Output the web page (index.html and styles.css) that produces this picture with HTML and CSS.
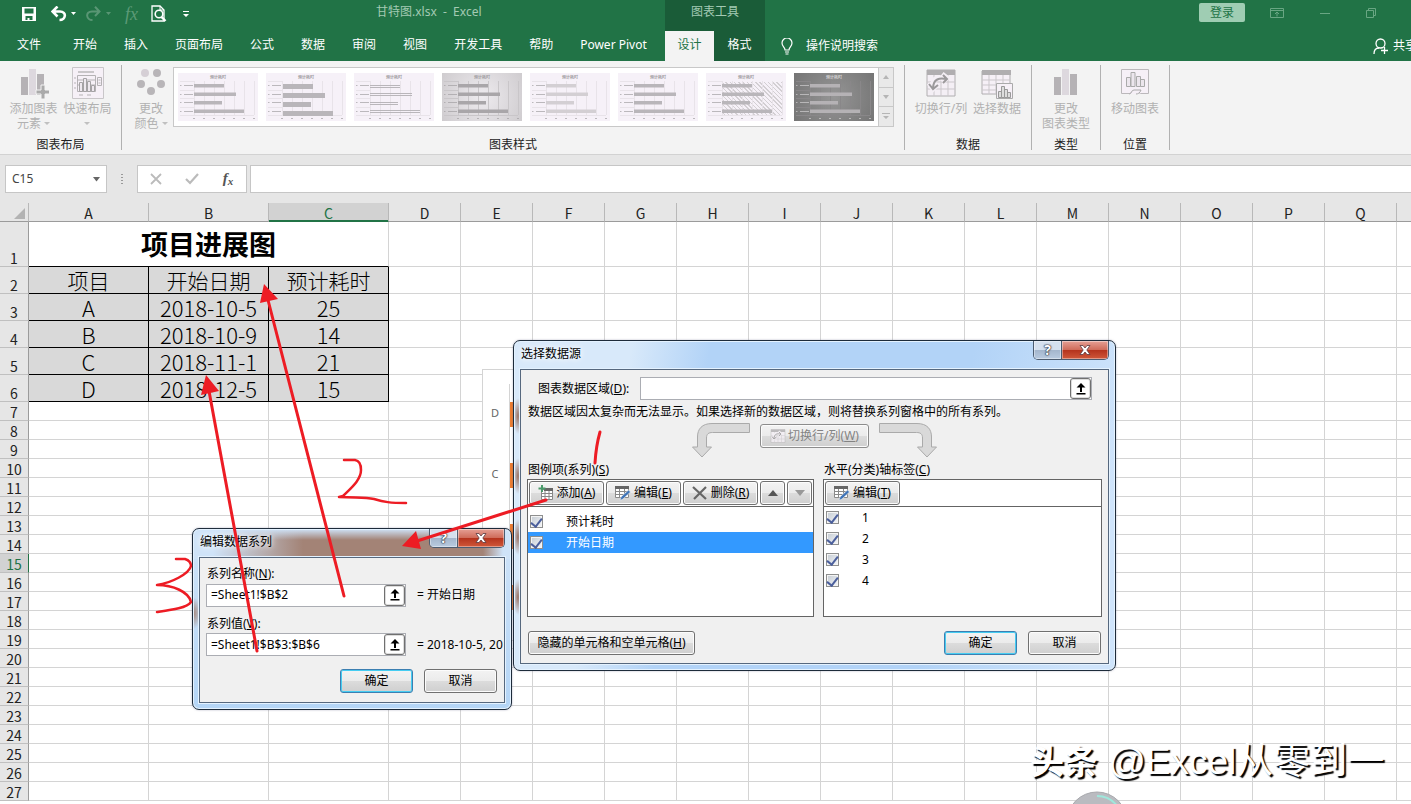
FILE: index.html
```html
<!DOCTYPE html>
<html lang="zh-CN">
<head>
<meta charset="utf-8">
<title>甘特图.xlsx - Excel</title>
<link rel="stylesheet" href="styles.css">
</head>
<body>
<svg class="defs" aria-hidden="true">
  <symbol id="thumb" viewBox="0 0 80 48">
    <path class="grid" d="M16.5 8v34M26.500 8v34M36.500 8v34M46.500 8v34M56.500 8v34M66.500 8v34M76.500 8v34M2 8.500h14M2 17.500h14M2 25.500h14M2 34.500h14M2 42.500h74"/>
    <path class="marks" d="M2 12.500h1.500M6 12.500h9M2 21.500h1.500M6 21.500h9M2 29.500h1.500M6 29.500h9M2 38.500h1.500M6 38.500h9M15 45.500h2M25 45.500h2M35 45.500h2M45 45.500h2M55 45.500h2M65 45.500h2M75 45.500h2"/>
    <text class="cap" x="40" y="6" text-anchor="middle">预计耗时</text>
  </symbol>
  <symbol id="bars" viewBox="0 0 80 48"><path d="M16 11h30v3.500H16zM16 19.500h42v3.500H16zM16 28h28v3.500H16zM16 36.500h50v3.500H16z"/></symbol>
  <symbol id="fat" viewBox="0 0 80 48"><path d="M17 11h30v5H17zM17 20h42v5H17zM17 29h28v5H17zM17 38h50v5H17z"/></symbol>
  <symbol id="thin" viewBox="0 0 80 48"><path d="M16 12h30v1H16zM16 14h30v1H16zM16 20h42v1H16zM16 22h42v1H16zM16 29h28v1H16zM16 31h28v1H16zM16 37h50v1H16zM16 39h50v1H16z"/></symbol>
  <symbol id="upload" viewBox="0 0 16 16"><path d="M8 2L3.500 6.500h3.500V11h2V6.500h3.500zM3.500 12h9v1.500h-9z" fill="#000"/></symbol>
  <symbol id="editgrid" viewBox="0 0 16 16"><path d="M.5 1.500h13v11H.5zM.5 6.500h13M.5 9.500h13M4.500 4v8.500M9.500 4v8.500" fill="#fff" stroke="#8a8a8a"/><path d="M0 1h14v3H0z" fill="#666"/><path d="M5 15.500l1-3.500 7.500-7 2 2-7.500 7z" fill="#3f74b8" stroke="#eee" stroke-width=".6"/></symbol>
  <symbol id="swap" viewBox="0 0 30 32">
    <path d="M1 3h28v26H1z" fill="#f4eff5" stroke="#b0aeb0"/><path d="M1 3h28v5H1z" fill="#b0aeb0"/><path d="M1 15h28M1 22h28M8 8v21M15 8v21M22 8v21" stroke="#cbc7cb" fill="none"/><path d="M7 18c0-9 7-7 13-7M16 7l5 4-5 4M3 16l4 6 5-5" fill="none" stroke="#f4eff5" stroke-width="5"/><path d="M7 22c0-11 7-11 13-10M17 8l4 4-4 4M3 17l4 5 5-4" fill="none" stroke="#9b999b" stroke-width="2"/>
  </symbol>
</svg>

<header class="top">
  <div class="quick">
    <button aria-label="保存"><svg width="16" height="16" viewBox="0 0 16 16"><path fill="#fff" fill-rule="evenodd" d="M1 1h14v14H1zM3.500 2.500v5h9v-5zM4.500 10v4h2v-2h2v2h3v-4z"/></svg></button>
    <button aria-label="撤消"><svg width="26" height="16" viewBox="0 0 26 16"><path d="M1 5.500h8c7 0 6 8.500-.5 8.500M6.500 .5L1.500 5.500 6.500 10.500" fill="none" stroke="#fff" stroke-width="2.600"/><path d="M20 6h5l-2.500 3z" fill="#fff"/></svg></button>
    <button aria-label="恢复"><svg width="26" height="16" viewBox="0 0 26 16" opacity=".25"><path d="M14 5.500H6c-7 0-6 8.500 .5 8.500M9 .8l4.500 4.700L9 10" fill="none" stroke="#fff" stroke-width="2"/><path d="M20 6h5l-2.500 3z" fill="#fff"/></svg></button>
    <button class="qfx" aria-label="插入函数">fx</button>
    <button aria-label="打印预览"><svg width="16" height="18" viewBox="0 0 16 18"><path d="M1 1h8l4 4v11H1z" fill="none" stroke="#fff" stroke-width="1.300"/><circle cx="8" cy="9" r="3.800" fill="#217346" stroke="#fff" stroke-width="1.600"/><path d="M10.500 12l4 4" stroke="#fff" stroke-width="2.400"/><path d="M9 1v4h4" fill="none" stroke="#fff"/></svg></button>
    <button aria-label="自定义快速访问工具栏"><svg width="8" height="8" viewBox="0 0 8 8"><path d="M1 1h6v1H1zM1 4h6L4 7z" fill="#fff"/></svg></button>
  </div>
  <div class="doc">甘特图.xlsx&nbsp; -&nbsp; Excel</div>
  <div class="ctx">图表工具</div>
  <div class="winctl">
    <button class="login">登录</button>
    <button aria-label="功能区显示选项"><svg width="14" height="12" viewBox="0 0 14 12" fill="none" stroke="#69a683"><path d="M.5 1.500h13v9H.5zM.5 3.500h13M7 9.500V5M5 7l2-2 2 2"/></svg></button>
    <button aria-label="最小化"><svg width="10" height="12" viewBox="0 0 10 12"><path d="M0 6.500h10" stroke="#69a683"/></svg></button>
    <button aria-label="还原"><svg width="10" height="12" viewBox="0 0 10 12" fill="none" stroke="#69a683"><path d="M.5 3.500h7v7h-7zM2.500 3.500v-2h7v7h-2"/></svg></button>
  </div>
  <nav class="tabs">
    <a class="file" href="#">文件</a><a href="#">开始</a><a href="#">插入</a><a href="#">页面布局</a><a href="#">公式</a><a href="#">数据</a><a href="#">审阅</a><a href="#">视图</a><a href="#">开发工具</a><a href="#">帮助</a><a href="#">Power Pivot</a>
  </nav>
  <nav class="ctxtabs"><a class="on" href="#">设计</a><a href="#">格式</a></nav>
  <div class="tell">
    <a href="#"><svg width="12" height="17" viewBox="0 0 12 17" fill="none" stroke="#fff" stroke-width="1.200"><path d="M4 12c0-3-3-3.500-3-7a5 5 0 0 1 10 0c0 3.500-3 4-3 7zM4 14h4M4.500 16h3"/></svg>操作说明搜索</a>
    <a class="share" href="#"><svg width="16" height="17" viewBox="0 0 16 17" fill="none" stroke="#fff" stroke-width="1.300"><circle cx="7.500" cy="5.500" r="4.500"/><path d="M1 16c0-4 2-6 5-6M8 12.500h7M11.500 9v7"/></svg>共享</a>
  </div>
</header>

<section class="ribbon">
  <div class="group g-layout">
    <div class="tools">
      <button class="big"><svg width="30" height="32" viewBox="0 0 30 32"><path d="M2 10h7v18H2zM18 7h7v21h-7z" fill="#b5b2b5"/><path d="M10 2h7v26h-7z" fill="#ddd8de"/><path d="M17 23h5v-5h4v5h5v4h-5v5h-4v-5h-5z" fill="#aaa" stroke="#f3f3f3"/></svg><span>添加图表<br>元素 <i class="dd"></i></span></button>
      <button class="big"><svg width="32" height="32" viewBox="0 0 32 32"><path d="M.5 .5h31v31H.5z" fill="#f6f0f7" stroke="#c9c6c9"/><path d="M6 4h16v2H6z" fill="#c9c6c9"/><path d="M5.500 8.500h18v16h-18zM5 13h19M5 18h19M2 11h2M2 16h2M2 21h2M7 28h4M15 28h4M25.500 10.500h4v8h-4zM26.500 13h2M26.500 16h2" fill="none" stroke="#b5b2b5"/><path d="M7.500 15.500h3v9h-3zM11.500 11.500h3v13h-3zM15.500 14.500h3v10h-3zM19.500 18.500h3v6h-3z" fill="#eee8ef" stroke="#a5a2a5"/></svg><span>快速布局<br><i class="dd"></i></span></button>
    </div>
    <div class="cap">图表布局</div>
  </div>
  <div class="group g-style">
    <div class="tools">
      <button class="big"><svg width="30" height="32" viewBox="0 0 30 32" fill="#b8b5b8"><circle cx="9" cy="6" r="4" fill="#d5cfd5"/><circle cx="21" cy="6" r="4"/><circle cx="5" cy="17" r="4"/><circle cx="25" cy="17" r="4"/><circle cx="15" cy="24" r="4"/></svg><span>更改<br>颜色 <i class="dd"></i></span></button>
      <div class="gallery">
        <button class="th"><svg><use href="#thumb"/><use href="#bars"/></svg></button>
        <button class="th"><svg><use href="#thumb"/><use href="#fat"/></svg></button>
        <button class="th"><svg><use href="#thumb"/><use href="#thin"/></svg></button>
        <button class="th shade"><svg><use href="#thumb"/><use href="#bars"/></svg></button>
        <button class="th pale"><svg><use href="#thumb"/><use href="#bars"/></svg></button>
        <button class="th"><svg><use href="#thumb"/><use href="#bars"/></svg></button>
        <button class="th hatch"><svg><use href="#thumb"/><use href="#bars"/></svg></button>
        <button class="th dark"><svg><use href="#thumb"/><use href="#bars"/></svg></button>
        <div class="scroller">
          <button aria-label="上一行"><svg width="6" height="4" viewBox="0 0 6 4"><path d="M0 4h6L3 0z"/></svg></button>
          <button aria-label="下一行"><svg width="6" height="4" viewBox="0 0 6 4"><path d="M0 0h6L3 4z"/></svg></button>
          <button aria-label="其他"><svg width="8" height="7" viewBox="0 0 8 7"><path d="M0 0h8v1H0zM1 3h6L4 6z"/></svg></button>
        </div>
      </div>
    </div>
    <div class="cap">图表样式</div>
  </div>
  <div class="group g-data">
    <div class="tools">
      <button class="big"><svg width="30" height="32"><use href="#swap"/></svg><span>切换行/列</span></button>
      <button class="big"><svg width="32" height="32" viewBox="0 0 32 32"><path d="M1 4h28v23H1z" fill="#f6f0f7" stroke="#b0aeb0"/><path d="M1 3h29v5H1z" fill="#b0aeb0"/><path d="M1 13h28M1 18h28M1 23h28M8 8v19M15 8v19M22 8v19" stroke="#cbc7cb"/><path d="M15.500 16.500h16v15h-16z" fill="#f6f0f7" stroke="#aaa"/><path d="M17.500 24.500h3v6h-3zM20.500 19.500h3v11h-3zM23.500 22.500h3v8h-3zM26.500 25.500h3v5h-3z" fill="#ddd" stroke="#999"/></svg><span>选择数据</span></button>
    </div>
    <div class="cap">数据</div>
  </div>
  <div class="group g-one">
    <div class="tools"><button class="big"><svg width="24" height="32" viewBox="0 0 24 32"><path d="M0 10h7v18H0zM16 7h7v21h-7z" fill="#b5b2b5"/><path d="M8 2h7v26H8z" fill="#ddd8de"/></svg><span>更改<br>图表类型</span></button></div>
    <div class="cap">类型</div>
  </div>
  <div class="group g-one">
    <div class="tools"><button class="big"><svg width="28" height="32" viewBox="0 0 28 32"><path d="M.5 2.500h27v24h-8l-2-1h-6l-3 1h-8z" fill="#f6f0f7" stroke="#bbb8bb"/><path d="M8 27c3 0 2-4 5-4h7c-1 3-3 4-5 4" fill="#f6f0f7" stroke="#aaa"/><path d="M5.500 10.500h4v9h-4zM10 5.500h4v14h-4zM15.500 9.500h4v10h-4zM19.500 12.500h4v7h-4z" fill="#ece6ed" stroke="#aaa"/></svg><span>移动图表</span></button></div>
    <div class="cap">位置</div>
  </div>
</section>

<div class="formula">
  <button class="namebox"><span>C15</span><svg width="7" height="5" viewBox="0 0 7 5"><path d="M0 0h7L3.500 4.500z" fill="#666"/></svg></button>
  <div class="dots"><i></i><i></i><i></i><i></i></div>
  <div class="fbtns">
    <button aria-label="取消输入"><svg width="12" height="12" viewBox="0 0 12 12"><path d="M1 1l10 10M11 1L1 11" stroke="#bbb" stroke-width="1.800"/></svg></button>
    <button aria-label="输入"><svg width="14" height="12" viewBox="0 0 14 12"><path d="M1 6l4 4 8-9" fill="none" stroke="#bbb" stroke-width="2.200"/></svg></button>
    <button class="fx" aria-label="函数">f<sub>x</sub></button>
  </div>
  <input class="fin" aria-label="编辑栏">
</div>

<main class="sheet">
  <table class="cells">
    <colgroup><col class="c0"><col class="cw"><col class="cw"><col class="cw"></colgroup>
    <thead><tr><th class="corner"><svg width="11" height="11" viewBox="0 0 11 11"><path d="M11 0v11H0z" fill="#b3b3b3"/></svg></th><th>A</th><th>B</th><th class="sel">C</th></tr></thead>
    <tbody>
      <tr class="r1"><th>1</th><td class="title" colspan="3">项目进展图</td></tr>
      <tr class="rd names"><th>2</th><td>项目</td><td>开始日期</td><td>预计耗时</td></tr>
      <tr class="rd"><th>3</th><td>A</td><td>2018-10-5</td><td>25</td></tr>
      <tr class="rd"><th>4</th><td>B</td><td>2018-10-9</td><td>14</td></tr>
      <tr class="rd"><th>5</th><td>C</td><td>2018-11-1</td><td>21</td></tr>
      <tr class="rd"><th>6</th><td>D</td><td>2018-12-5</td><td>15</td></tr>
    </tbody>
  </table>
</main>

<div class="chart"><div class="labels"><span>D</span><span>C</span></div><div class="plot"><i></i><i></i><i></i><i></i></div></div>

<section class="dlg dlg-src" role="dialog" aria-label="选择数据源">
  <div class="bar"><h2>选择数据源</h2><div class="caps"><button class="help" aria-label="帮助">?</button><button class="close" aria-label="关闭"><svg width="12" height="10" viewBox="0 0 12 10"><path d="M1 .5h3l2 2.500 2-2.500h3L7.800 5 11 9.500H8L6 7 4 9.500H1L4.200 5z" fill="#fff" stroke="#5a3a40" stroke-width=".8"/></svg></button></div></div>
  <div class="body">
    <div class="range"><label for="rng">图表数据区域(<u>D</u>):</label><div class="ref"><input id="rng"><button aria-label="折叠对话框"><svg width="16" height="16"><use href="#upload"/></svg></button></div></div>
    <p class="note">数据区域因太复杂而无法显示。如果选择新的数据区域，则将替换系列窗格中的所有系列。</p>
    <div class="swaprow">
      <svg width="58" height="36" viewBox="0 0 58 36"><path d="M57.500 .5H20C10 .5 5.500 6 5.500 14v10H.5l9.500 10 9.500-10h-5V15c0-4 2-5.500 6-5.500h37z" fill="#d9d9d9" stroke="#aaa"/></svg>
      <button class="btn off"><svg width="16" height="16"><use href="#swap"/></svg><span>切换行/列(<u>W</u>)</span></button>
      <svg width="58" height="36" viewBox="0 0 58 36"><path d="M.5 .5H38C48 .5 52.500 6 52.500 14v10h5L48 34 38.500 24h5V15c0-4-2-5.500-6-5.500H.5z" fill="#d9d9d9" stroke="#aaa"/></svg>
    </div>
    <div class="lists">
      <div class="pane">
        <div class="plabel">图例项(系列)(<u>S</u>)</div>
        <div class="list">
          <div class="lbar">
            <button class="btn"><svg width="16" height="16" viewBox="0 0 16 16"><path d="M3.500 4.500h11v10h-11zM3.500 8.500h11M3.500 11.500h11M7 5v9M11 5v9" fill="#fff" stroke="#888"/><path d="M6 3h9v3H6z" fill="#666"/><path d="M4 0v7M.5 3.500h7" stroke="#4a9a6a" stroke-width="2"/></svg><span>添加(<u>A</u>)</span></button>
            <button class="btn"><svg width="16" height="16"><use href="#editgrid"/></svg><span>编辑(<u>E</u>)</span></button>
            <button class="btn"><svg width="16" height="16" viewBox="0 0 16 16"><path d="M1 2l13 12M14 2L2 14" stroke="#666" stroke-width="2.200"/></svg><span>删除(<u>R</u>)</span></button>
            <button class="btn sm" aria-label="上移"><svg width="10" height="6" viewBox="0 0 10 6"><path d="M0 6h10L5 0z" fill="#555"/></svg></button>
            <button class="btn sm" aria-label="下移"><svg width="10" height="6" viewBox="0 0 10 6"><path d="M0 0h10L5 6z" fill="#999"/></svg></button>
          </div>
          <div class="items roomy">
            <label><input type="checkbox" checked><span>预计耗时</span></label>
            <label class="hit"><input type="checkbox" checked><span>开始日期</span></label>
          </div>
        </div>
      </div>
      <div class="pane">
        <div class="plabel">水平(分类)轴标签(<u>C</u>)</div>
        <div class="list">
          <div class="lbar"><button class="btn"><svg width="16" height="16"><use href="#editgrid"/></svg><span>编辑(<u>T</u>)</span></button></div>
          <div class="items">
            <label><input type="checkbox" checked><span>1</span></label>
            <label><input type="checkbox" checked><span>2</span></label>
            <label><input type="checkbox" checked><span>3</span></label>
            <label><input type="checkbox" checked><span>4</span></label>
          </div>
        </div>
      </div>
    </div>
    <div class="foot"><button class="btn hide"><span>隐藏的单元格和空单元格(<u>H</u>)</span></button><button class="btn ok">确定</button><button class="btn">取消</button></div>
  </div>
</section>

<section class="dlg dlg-edit" role="dialog" aria-label="编辑数据系列">
  <div class="bar"><h2>编辑数据系列</h2><div class="caps"><button class="help" aria-label="帮助">?</button><button class="close" aria-label="关闭"><svg width="12" height="10" viewBox="0 0 12 10"><path d="M1 .5h3l2 2.500 2-2.500h3L7.800 5 11 9.500H8L6 7 4 9.500H1L4.200 5z" fill="#fff" stroke="#5a3a40" stroke-width=".8"/></svg></button></div></div>
  <div class="body">
    <label for="sname">系列名称(<u>N</u>):</label>
    <div class="line"><div class="ref"><input id="sname" value="=Sheet1!$B$2"><button aria-label="折叠对话框"><svg width="16" height="16"><use href="#upload"/></svg></button></div><output>= 开始日期</output></div>
    <label for="sval">系列值(<u>V</u>):</label>
    <div class="line"><div class="ref"><input id="sval" value="=Sheet1!$B$3:$B$6"><button aria-label="折叠对话框"><svg width="16" height="16"><use href="#upload"/></svg></button></div><output>= 2018-10-5, 20</output></div>
    <div class="foot"><button class="btn ok">确定</button><button class="btn">取消</button></div>
  </div>
</section>

<svg class="ink" width="1411" height="804" viewBox="0 0 1411 804" aria-hidden="true">
  <g fill="none" stroke="#ed1c24" stroke-width="3" stroke-linecap="round" stroke-linejoin="round">
    <path d="M344 596L268 300M257 651L209 391M546 500L417 541"/>
    <path d="M600 432Q596 446 595 463"/>
    <path d="M344 460h11q6 1 6 10c0 10-10 18-18 26l-4 1c18 1 26 0 35 2 10 3 16 4 32 4" stroke-width="2.500"/>
    <path d="M176 559h9q6 2 6 7c-2 8-20 17-34 19 16 0 32 7 34 17-4 6-20 8-34 10" stroke-width="2.500"/>
  </g>
  <path fill="#ed1c24" d="M264 284L260 303 278 299zM206 375L201 395 219 391zM402 546L416 531 421 549z"/>
</svg>
<svg class="orb" width="62" height="13" viewBox="0 0 62 13"><circle cx="31" cy="31" r="30" fill="#babbc0" stroke="#a8a9ad"/><path d="M31 5A26 26 0 0 1 52 16" fill="none" stroke="#9fe8dc" stroke-width="2"/></svg>
<div class="mark"><b>头条</b> @Excel从零到一</div>
<script src="sheet.js"></script>
</body>
</html>
```
FILE: styles.css
```css
* { box-sizing: border-box; }
body {
  margin: 0; height: 100vh; overflow: hidden; position: relative;
  display: flex; flex-direction: column; background: #fff; color: #000;
  font: 12px/16px "Noto Sans", "Noto Sans CJK SC", sans-serif;
}
button, input { font: inherit; color: inherit; margin: 0; padding: 0; border: 0; background: none; border-radius: 0; }
a { color: inherit; text-decoration: none; }
svg { flex: none; display: block; }
.defs { position: absolute; width: 0; height: 0; }

/* title bar and tabs */
.top { flex: none; display: grid; grid-template: 31px 30px / 376px 289px 100px 1fr; background: #217346; color: #fff; }
.quick { display: flex; align-items: center; padding: 0 0 3px 21px; gap: 13px; }
.quick button:nth-child(2) { margin-left: 1px; }
.quick button:nth-child(3) { margin-left: -4px; }
.quick button:last-child { margin-left: 2px; }
.qfx { font: italic 18px/20px "Liberation Serif", serif; color: #5c9a77; }
.doc { color: #a3cab3; padding-top: 4px; }
.ctx { background: #1a5c38; color: #a3cab3; text-align: center; padding-top: 4px; }
.winctl { display: flex; align-items: center; justify-content: flex-end; gap: 36px; padding: 0 35px 6px 0; }
.login { background: #9fcdb3; color: #217346; width: 46px; height: 19px; border-radius: 2px; line-height: 18px; margin-right: -11px; }
.tabs { grid-column: 1 / 3; display: flex; gap: 3px; padding-left: 5px; }
.tabs a, .ctxtabs a { padding: 0 12px; line-height: 28px; white-space: nowrap; }
.tabs .file { margin-right: 5px; }
.ctxtabs { background: #1a5c38; display: flex; }
.ctxtabs a { flex: 1 1 50px; text-align: center; padding: 0; }
.ctxtabs .on { background: #f3f3f3; color: #217346; flex-basis: 49px; flex-grow: 0; }
.tell { display: flex; justify-content: space-between; padding-left: 16px; overflow: hidden; }
.tell a { display: flex; align-items: center; gap: 13px; }
.tell .share { gap: 4px; margin-right: -6px; }

/* ribbon */
.ribbon { flex: none; display: flex; background: #f3f3f3; border-bottom: 1px solid #d2d2d2; padding: 4px 0; height: 94px; }
.group { flex: none; display: flex; flex-direction: column; justify-content: space-between; border-right: 1px solid #b1b1b1; }
.g-layout { width: 122px; }
.g-style { width: 783px; }
.g-data { width: 127px; }
.g-one { width: 69px; }
.tools { display: flex; justify-content: center; padding-top: 2px; }
.group .cap { text-align: center; line-height: 12px; height: 11px; color: #222; }
.big { display: flex; flex-direction: column; align-items: center; gap: 2px; color: #b1b1b1; line-height: 15px; width: 54px; white-space: nowrap; }
.g-data .tools { gap: 2px; padding-left: 2px; }
.dd { display: inline-block; border: 3px solid transparent; border-top-color: #c0c0c0; border-bottom: 0; vertical-align: 3px; }
.g-style .tools { justify-content: flex-start; padding-left: 5px; }
.g-style .big { width: 46px; padding-left: 2px; flex: none; }
.gallery { display: flex; border: 1px solid #c8c8c8; background: #fff; height: 60px; flex: none; gap: 8px; padding-left: 4px; align-items: center; }
.th { width: 80px; height: 48px; background: #f6f1f8; flex: none; --bar: #b9b6ba; --grid: #e8e3e9; --txt: #a29fa3; }
.th svg { width: 80px; height: 48px; fill: var(--bar); }
.grid { stroke: var(--grid); fill: none; stroke-width: 1; }
.marks { stroke: var(--txt); fill: none; stroke-width: 1; opacity: .7; }
text.cap { font-size: 4px; font-weight: bold; fill: var(--txt); }
.th.shade { background: radial-gradient(circle, #eeebef, #cfcccf); --bar: #a9a6a9; --grid: #c9c6c9; }
.th.pale { --bar: #d3cfd3; }
.th.hatch { background: linear-gradient(#f6f1f8 9px, transparent 9px 42px, #f6f1f8 42px), linear-gradient(90deg, #f6f1f8 16px, transparent 16px 76px, #f6f1f8 76px), repeating-linear-gradient(45deg, #f6f1f8 0 2px, #d3cfd3 2px 3px); }
.th.dark { background: radial-gradient(circle, #959595, #757575); --bar: #b5b2b5; --grid: #898789; --txt: #d0ced0; }
.scroller { align-self: stretch; width: 15px; margin-left: -4px; display: flex; flex-direction: column; border-left: 1px solid #c8c8c8; background: #e9e9e9; fill: #b5b5b5; }
.scroller button { flex: 1; display: grid; place-items: center; }
.scroller button + button { border-top: 1px solid #c8c8c8; }

/* formula bar */
.formula { flex: none; display: flex; background: #e6e6e6; padding: 10px 0 10px 5px; height: 48px; }
.namebox { width: 102px; border: 1px solid #c6c6c6; background: #fff; display: flex; align-items: center; justify-content: space-between; padding: 0 6px; color: #444; }
.dots { width: 30px; display: flex; flex-direction: column; align-items: center; justify-content: center; gap: 2px; }
.dots i { width: 2px; height: 1px; background: #999; }
.fbtns { width: 110px; border: 1px solid #c6c6c6; background: #fff; display: grid; grid-template-columns: repeat(3, 36px); place-items: center; }
.fx { font: italic bold 15px/18px "Liberation Serif", serif; color: #555; }
.fx sub { font-size: 11px; vertical-align: -2px; }
.fin { flex: 1; margin-left: 3px; border: 1px solid #c6c6c6; border-right: 0; background: #fff; min-width: 0; }

/* worksheet */
.sheet { flex: 1; overflow: hidden; min-height: 0; }
.cells { table-layout: fixed; border-collapse: separate; border-spacing: 0; width: 1469px; font: 14px/17px "Noto Sans CJK SC", sans-serif; }
.c0 { width: 29px; }
.cw { width: 120px; }
.cells th, .cells td { padding: 0; height: 19px; border-right: 1px solid #d4d4d4; border-bottom: 1px solid #d4d4d4; text-align: center; font-weight: normal; white-space: nowrap; }
.cells th { background: #e6e6e6; color: #222; }
.cells thead th { border-right-color: #b8b8b8; border-bottom-color: #9b9b9b; line-height: 16px; padding-top: 2px; }
.cells thead .sel { background: #d2d2d2; color: #217346; box-shadow: inset 0 -1px #217346; border-bottom-color: #217346; }
.cells tbody th { border-right-color: #9b9b9b; border-bottom-color: #c0c0c0; vertical-align: bottom; line-height: 16px; }
.cells tbody th.sel { background: #d2d2d2; color: #217346; border-right-color: #217346; }
.corner svg { margin: 1px 3px 0 auto; }
.cells .r1 > * { height: 45px; }
.cells .title { font-size: 27px; line-height: 42px; font-weight: bold; border-bottom-color: #000; }
.cells .rd > * { height: 27px; }
.cells .rd td { font-size: 22px; line-height: 26px; font-weight: 300; }
.cells .names td { font-size: 21px; }
.cells .rd td:nth-child(-n+4) { background: #d9d9d9; border-right-color: #000; border-bottom-color: #000; }

/* chart behind the dialogs */
.chart { position: absolute; left: 482px; top: 369px; width: 260px; height: 272px; background: #fff; border: 1px solid #d4d4d4; display: flex; padding: 14px 0; color: #666; }
.labels { width: 26px; padding-right: 2px; display: grid; grid-template-rows: repeat(4, 61px); text-align: center; font-size: 11px; line-height: 57px; }
.plot { flex: 1; border-left: 1px solid #d4d4d4; display: grid; grid-template-rows: repeat(4, 61px); align-items: center; }
.plot i { height: 25px; background: #ed7d31; width: 120px; }

/* dialogs */
.dlg { position: absolute; display: flex; flex-direction: column; border: 1px solid #1d2b3a; border-radius: 7px; padding: 0 6px 6px; box-shadow: inset 0 0 0 1px #e4f2ff, 0 0 2px #6688; background: #b9d7f5; }
.dlg-src { left: 513px; top: 340px; width: 603px; height: 331px; background: radial-gradient(ellipse 5px 18px at 4px 75px, #9a7264, #0000), radial-gradient(ellipse 5px 18px at 4px 135px, #9a7264, #0000), radial-gradient(ellipse 5px 18px at 4px 196px, #9a7264, #0000), radial-gradient(ellipse 5px 18px at 4px 256px, #9a7264, #0000), linear-gradient(100deg, #d8e9fa 0 18%, #b2d3f7 30% 70%, #cfe4fb 95%); }
.dlg-edit { left: 192px; top: 528px; width: 320px; height: 182px; background: linear-gradient(#cfe3f8, #cfe3f800 11px), radial-gradient(ellipse 9px 16px at 0 84px, #a38376, #a3837600), linear-gradient(90deg, #cfe3f8 20px, #a38376 110px 290px, #cfe3f8 310px) 0 0 / 100% 30px no-repeat, linear-gradient(#cfe3f8, #b4d5f6); }
.bar { flex: none; height: 28px; display: flex; justify-content: space-between; padding-left: 1px; }
.bar h2 { margin: 0; font: inherit; line-height: 26px; text-shadow: 0 0 5px #fff, 0 0 8px #fff; }
.caps { display: flex; height: 19px; border: 1px solid #4c5c70; border-top: 0; border-radius: 0 0 5px 5px; overflow: hidden; }
.caps button { display: grid; place-items: center; box-shadow: inset 0 0 0 1px #fff6; }
.help { width: 27px; font: bold 14px/16px "Noto Sans", sans-serif; color: #fff; text-shadow: 0 0 1px #223, 0 0 1px #223, 0 0 2px #223; background: linear-gradient(#d5e0ee 50%, #a3b5cc 50%, #b9cbe0); }
.close { width: 47px; border-left: 1px solid #4c5c70; background: linear-gradient(#e5a095, #cf6a58 50%, #b4321c 50%, #d0583a); }
.body { flex: 1; min-height: 0; background: #f0f0f0; border: 1px solid #56687e; box-shadow: 0 0 0 1px #e4f2ff; display: flex; flex-direction: column; overflow: hidden; }
.dlg-src .body { padding: 7px; }
.range { display: flex; align-items: center; padding: 0 9px 0 10px; }
.range label { width: 102px; flex: none; }
.ref { flex: 1; min-width: 0; display: flex; height: 23px; border: 1px solid #abadb3; background: #fff; }
.ref input { flex: 1; min-width: 0; padding: 0 4px; }
.ref button { width: 21px; border: 1px solid #707070; border-radius: 3px; box-shadow: inset 0 0 0 1px #ddd; display: grid; place-items: center; background: #fff; }
.note { margin: 4px 0 3px; line-height: 16px; white-space: nowrap; }
.swaprow { display: flex; gap: 10px; justify-content: center; height: 37px; }
.swaprow .btn { width: 109px; margin-top: 1px; }
.btn { height: 24px; min-width: 73px; border: 1px solid #707070; border-radius: 3px; display: flex; align-items: center; justify-content: center; gap: 4px; white-space: nowrap; line-height: 20px; background: linear-gradient(#f3f3f3, #ebebeb 50%, #dcdcdc 50%, #cfcfcf); box-shadow: inset 0 0 0 1px #fcfcfc; }
.btn.off { color: #838383; border-color: #8c8c8c; gap: 2px; }
.btn.off svg { opacity: .8; }
.btn.ok { border-color: #3c7fb1; box-shadow: inset 0 0 0 1px #46cdf2; }
.lists { display: grid; grid-template-columns: 287fr 279fr; gap: 9px; margin: 0 -1px; }
.pane { min-width: 0; }
.plabel { line-height: 19px; height: 19px; padding-left: 1px; }
.list { border: 1px solid #646464; background: #fff; height: 138px; }
.lbar { display: flex; gap: 2px; padding: 1px; height: 27px; border-bottom: 1px solid #646464; }
.lbar .btn { width: 75px; gap: 3px; }
.lbar .btn.sm { width: 25px; min-width: 25px; }
.items label { display: flex; align-items: center; height: 21px; padding-left: 2px; }
.items.roomy { padding-top: 4px; }
.items label.hit { background: #3399ff; color: #fff; }
.items span { padding-left: 23px; }
.items input { appearance: none; width: 13px; height: 13px; flex: none; border: 1px solid #8e8f8f; background: linear-gradient(135deg, #c4cbd3, #f4f6f8); box-shadow: inset 0 0 0 1px #f4f4f4; display: grid; place-items: center; }
.items input::before { content: ""; width: 5px; height: 9px; border: solid #4b5f9c; border-width: 0 2px 2px 0; transform: rotate(38deg); }
.foot { display: flex; gap: 11px; justify-content: flex-end; }
.dlg-src .foot { margin-top: 14px; }
.dlg-src .foot .btn.hide { margin-right: auto; width: 167px; }
.dlg-edit .body { padding: 8px 7px 9px 6px; }
.dlg-edit label { line-height: 16px; height: 19px; padding-left: 1px; }
.line { display: flex; align-items: center; margin-bottom: 9px; gap: 11px; }
.line .ref { flex: 0 0 200px; }
.line output { white-space: nowrap; }
.dlg-edit .foot { margin-top: 4px; }

/* annotations */
.ink { position: absolute; left: 0; top: 0; pointer-events: none; }
.orb { position: absolute; left: 1066px; bottom: 0; }
.mark { position: absolute; left: 1030px; top: 740px; font: 37px/44px "Liberation Sans", "Noto Sans CJK SC", sans-serif; color: #fff; text-shadow: 2px 2px 1px #000; white-space: nowrap; }
.mark b { font-size: 34px; }
```
FILE: sheet.js
```js
const table = document.querySelector('.cells');
const letters = 'DEFGHIJKLMNOPQ';
const head = table.tHead.rows[0];
for (const letter of [...letters, '']) {
  const th = document.createElement('th');
  th.textContent = letter;
  head.append(th);
}
for (const row of table.tBodies[0].rows) {
  for (let i = 0; i <= letters.length; i++) row.insertCell();
}
for (let n = 7; n <= 27; n++) {
  const row = table.tBodies[0].insertRow();
  const th = document.createElement('th');
  th.textContent = n;
  if (n === 15) th.className = 'sel';
  row.append(th);
  for (let i = 0; i < letters.length + 4; i++) row.insertCell();
}
```
